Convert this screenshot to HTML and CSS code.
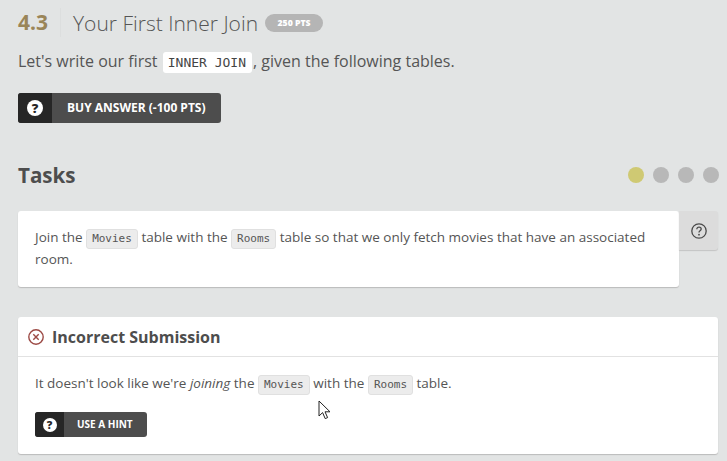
FILE: index.html
```html
<!DOCTYPE html>
<html lang="en">
<head>
    <meta charset="UTF-8">
    <title>Your First Inner Join</title>
    <link rel="stylesheet" href="styles.css">
</head>
<body>
    <div class="title-row">
        <span class="title-num">4.3</span>
        <h1 class="title-text">Your First Inner Join</h1>
        <span class="pts">250 PTS</span>
    </div>

    <p class="intro">Let's write our first <code class="code-white">INNER JOIN</code>, given the following tables.</p>

    <button class="icon-button buy-button">
        <span class="icon-box"><span class="q-circle">?</span></span>
        <span class="button-label">BUY ANSWER (-100 PTS)</span>
    </button>

    <div class="tasks-head">
        <h2>Tasks</h2>
        <div class="dots">
            <span class="dot dot-active"></span>
            <span class="dot"></span>
            <span class="dot"></span>
            <span class="dot"></span>
        </div>
    </div>

    <div class="task-row">
        <div class="task-card">
            Join the <code>Movies</code> table with the <code>Rooms</code> table so that we only fetch movies that have an associated room.
        </div>
        <div class="task-help">
            <svg width="16" height="16" viewBox="0 0 16 16" fill="none"><circle cx="8" cy="8" r="7.2" stroke="#4a4a4a" stroke-width="1.3"/><path d="M5.8 6.2c0-1.3 1-2.1 2.2-2.1s2.2.8 2.2 2c0 1.7-2.2 1.7-2.2 3.3" stroke="#4a4a4a" stroke-width="1.3"/><circle cx="8" cy="11.7" r=".9" fill="#4a4a4a"/></svg>
        </div>
    </div>

    <div class="result-card">
        <div class="result-head">
            <svg width="16" height="16" viewBox="0 0 16 16" fill="none" stroke="#9c4a45" stroke-width="1.4"><circle cx="8" cy="8" r="7.2"/><path d="M5.3 5.3l5.4 5.4M10.7 5.3l-5.4 5.4"/></svg>
            <h3>Incorrect Submission</h3>
        </div>
        <div class="result-body">
            <p>It doesn't look like we're <em>joining</em> the <code>Movies</code> with the <code>Rooms</code> table.</p>
            <button class="icon-button hint-button">
                <span class="icon-box"><span class="q-circle q-small">?</span></span>
                <span class="button-label">USE A HINT</span>
            </button>
        </div>
    </div>

    <svg class="cursor" width="14" height="20" viewBox="0 0 14 20"><path d="M1 1v15l3.6-3.4 2.6 6 2.4-1-2.6-5.8h5z" fill="#fff" stroke="#222" stroke-width="1"/></svg>
</body>
</html>
```

FILE: styles.css
```css
* {
    margin: 0;
    padding: 0;
    box-sizing: border-box;
}

html, body {
    height: 461px;
    overflow: hidden;
}

body {
    position: relative;
    background: #e2e4e4;
    color: #555;
    font-family: "Open Sans", sans-serif;
    font-size: 14px;
    padding: 8px 9px 0 18px;
}

code {
    display: inline-block;
    font-family: "DejaVu Sans Mono", monospace;
    font-size: 11px;
    line-height: 18px;
    height: 20px;
    padding: 0 5px;
    margin: 0;
    color: #555;
    background: #ececec;
    border: 1px solid #e0e0e0;
    border-radius: 3px;
}

/* Title */
.title-row {
    display: flex;
    align-items: center;
    height: 29px;
}

.title-num {
    font-size: 21px;
    font-weight: 700;
    color: #9a8558;
    padding-right: 12px;
    line-height: 29px;
    border-right: 1px solid #dcdede;
}

.title-text {
    font-size: 21px;
    font-weight: 300;
    color: #555;
    margin-left: 12px;
}

.pts {
    margin-left: 7px;
    width: 58px;
    height: 18px;
    line-height: 18px;
    text-align: center;
    font-size: 8.7px;
    font-weight: 800;
    color: #fff;
    background: #b5b5b5;
    border-radius: 9px;
}

.intro {
    margin-top: 13px;
    font-size: 16px;
    line-height: 22px;
    color: #555;
}

.code-white {
    font-size: 13px;
    height: 21px;
    line-height: 21px;
    padding: 0 6px 0 5px;
    margin: 0 1px 0 1px;
    background: #fff;
    border: 0;
    color: #444;
}

/* Buttons */
.icon-button {
    display: flex;
    align-items: stretch;
    border: 0;
    border-radius: 3px;
    overflow: hidden;
    background: #4d4d4d;
    color: #fff;
    font-family: inherit;
    font-weight: 700;
}

.icon-box {
    display: flex;
    align-items: center;
    justify-content: center;
    background: #262626;
}

.q-circle {
    width: 16px;
    height: 16px;
    line-height: 16px;
    text-align: center;
    font-size: 13px;
    font-weight: 800;
    color: #262626;
    background: #fff;
    border-radius: 50%;
}

.q-small {
    width: 14px;
    height: 14px;
    line-height: 14px;
    font-size: 11px;
}

.buy-button {
    margin-top: 20px;
    width: 203px;
    height: 30px;
    font-size: 12px;
}

.buy-button .icon-box {
    width: 34px;
}

.buy-button .button-label {
    line-height: 30px;
    margin-left: 15px;
    white-space: nowrap;
}

.hint-button {
    margin-top: 17px;
    width: 112px;
    height: 25px;
    font-size: 10px;
}

.hint-button .icon-box {
    width: 29px;
}

.hint-button .button-label {
    line-height: 25px;
    margin-left: 13px;
}

/* Tasks */
.tasks-head {
    display: flex;
    justify-content: space-between;
    align-items: center;
    margin-top: 37px;
    height: 30px;
}

.tasks-head h2 {
    font-size: 20.6px;
    font-weight: 700;
    color: #4d4d4d;
}

.dots {
    display: flex;
    gap: 9px;
    margin-right: -1px;
}

.dot {
    width: 16px;
    height: 16px;
    border-radius: 50%;
    background: #b8b8b8;
}

.dot-active {
    background: #cfc973;
}

.task-row {
    display: flex;
    align-items: flex-start;
    margin-top: 21px;
}

.task-card {
    width: 661px;
    height: 76px;
    padding: 16px 17px;
    font-size: 13.5px;
    line-height: 21px;
    background: #fff;
    border-radius: 3px;
    box-shadow: 0 1px 1px #bbb;
}

.task-help {
    display: flex;
    align-items: center;
    justify-content: center;
    width: 39px;
    height: 39px;
    background: #dcdcdc;
    border-radius: 0 3px 3px 0;
    box-shadow: 0 1px 1px #c4c4c4;
}

/* Result */
.result-card {
    margin-top: 30px;
    background: #fff;
    border-radius: 3px;
    height: 137px;
    box-shadow: 0 1px 1px #bbb;
}

.result-head {
    display: flex;
    align-items: center;
    gap: 8px;
    height: 40px;
    padding-left: 10px;
    border-bottom: 1px solid #e2e2e2;
}

.result-head h3 {
    font-size: 16px;
    font-weight: 700;
    color: #4d4d4d;
}

.result-body {
    padding: 16px 17px 0;
    font-size: 13.5px;
    line-height: 21px;
}

/* Mouse pointer caught in the screenshot */
.cursor {
    position: absolute;
    left: 318px;
    top: 400px;
}
```
